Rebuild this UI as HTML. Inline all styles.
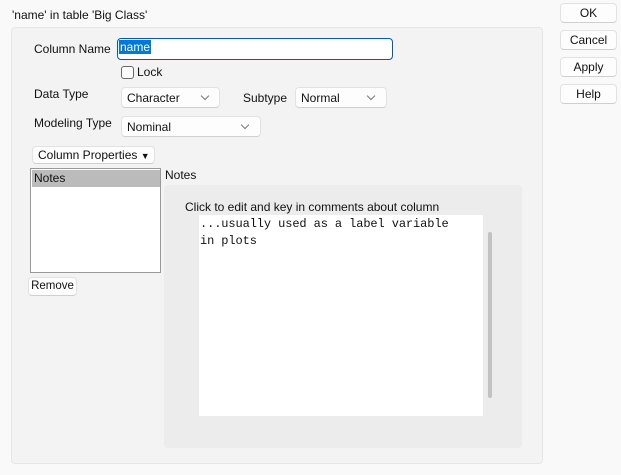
<!DOCTYPE html>
<html><head><style>
*{box-sizing:border-box;margin:0;padding:0}
body{width:621px;height:475px;background:#f9f9f9;font-family:"Liberation Sans",sans-serif;font-size:12px;color:#111;position:relative;overflow:hidden}
.a{position:absolute;white-space:nowrap}
.btn{position:absolute;background:#fdfdfd;border:1px solid #e2e2e2;border-bottom-color:#cfcfcf;border-radius:4px;text-align:center}
.dd{position:absolute;background:#fdfdfd;border:1px solid #e2e2e2;border-bottom-color:#d0d0d0;border-radius:4px;padding-left:5px}
.chev{position:absolute;width:6px;height:6px;border-right:1px solid #777;border-bottom:1px solid #777;transform:rotate(45deg)}
</style></head><body>
<div class="a" style="left:12px;top:8px">'name' in table 'Big Class'</div>
<div class="a" style="left:11px;top:27px;width:532px;height:437px;background:#f3f3f3;border:1px solid #e6e6e6;border-radius:4px"></div>

<div class="a" style="left:34px;top:42px">Column Name</div>
<div class="a" style="left:117px;top:38px;width:276px;height:22px;background:#fff;border:1px solid #0059b5;border-radius:4px"></div>
<div class="a" style="left:119px;top:40px;width:32px;height:14px;background:#0078d7;color:#fff;line-height:14px;padding-left:1px">name</div>

<div class="a" style="left:121px;top:66px;width:13px;height:13px;border:1px solid #666;border-radius:3px;background:#fafafa"></div>
<div class="a" style="left:137px;top:65px">Lock</div>

<div class="a" style="left:34px;top:87px">Data Type</div>
<div class="dd" style="left:121px;top:87px;width:99px;height:21px;line-height:20px">Character<div class="chev" style="left:80px;top:5px"></div></div>
<div class="a" style="left:243px;top:91px">Subtype</div>
<div class="dd" style="left:295px;top:87px;width:92px;height:21px;line-height:20px">Normal<div class="chev" style="left:72px;top:5px"></div></div>

<div class="a" style="left:34px;top:116px">Modeling Type</div>
<div class="dd" style="left:121px;top:116px;width:140px;height:21px;line-height:20px">Nominal<div class="chev" style="left:120px;top:5px"></div></div>

<div class="btn" style="left:32px;top:146px;width:123px;height:18px;line-height:16px;text-align:left;padding-left:5px">Column Properties <span style="font-size:9px">&#9660;</span></div>

<div class="a" style="left:30px;top:168px;width:131px;height:105px;background:#fff;border:1px solid #999"></div>
<div class="a" style="left:32px;top:170px;width:128px;height:17px;background:#bbb;padding-left:2px;line-height:17px">Notes</div>

<div class="btn" style="left:28px;top:277px;width:49px;height:19px;line-height:17px;font-size:11.5px">Remove</div>

<div class="a" style="left:165px;top:168px">Notes</div>
<div class="a" style="left:164px;top:185px;width:358px;height:263px;background:#ececec;border-radius:4px"></div>
<div class="a" style="left:185px;top:200px">Click to edit and key in comments about column</div>
<div class="a" style="left:199px;top:215px;width:284px;height:201px;background:#fff"></div>
<div class="a" style="left:200px;top:216px;font-family:'Liberation Mono',monospace;font-size:12px;line-height:17px;letter-spacing:-0.1px">...usually used as a label variable<br>in plots</div>
<div class="a" style="left:488px;top:232px;width:4px;height:166px;background:#c2c2c2;border-radius:2px"></div>

<div class="btn" style="left:560px;top:3px;width:57px;height:20px;line-height:18px">OK</div>
<div class="btn" style="left:560px;top:30px;width:57px;height:20px;line-height:18px">Cancel</div>
<div class="btn" style="left:560px;top:57px;width:57px;height:20px;line-height:18px">Apply</div>
<div class="btn" style="left:560px;top:84px;width:57px;height:20px;line-height:18px">Help</div>
</body></html>
